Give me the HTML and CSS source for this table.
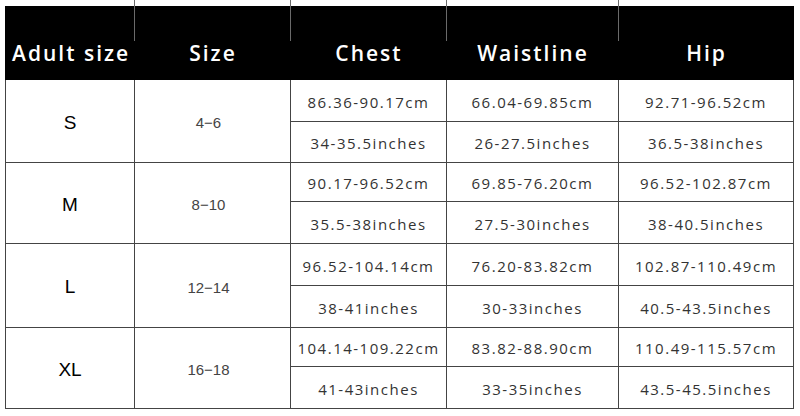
FILE: index.html
```html
<!DOCTYPE html>
<html>
<head>
<meta charset="utf-8">
<link rel="stylesheet" href="styles.css">
</head>
<body>
<div class="chart">
  <div class="hd first">Adult size</div>
  <div class="hd">Size</div>
  <div class="hd">Chest</div>
  <div class="hd">Waistline</div>
  <div class="hd">Hip</div>

  <div class="sz r1">S</div>
  <div class="num r1">4−6</div>
  <div class="val">86.36-90.17cm</div>
  <div class="val">66.04-69.85cm</div>
  <div class="val">92.71-96.52cm</div>
  <div class="val">34-35.5inches</div>
  <div class="val">26-27.5inches</div>
  <div class="val">36.5-38inches</div>

  <div class="sz r2">M</div>
  <div class="num r2">8−10</div>
  <div class="val">90.17-96.52cm</div>
  <div class="val">69.85-76.20cm</div>
  <div class="val">96.52-102.87cm</div>
  <div class="val">35.5-38inches</div>
  <div class="val">27.5-30inches</div>
  <div class="val">38-40.5inches</div>

  <div class="sz r3">L</div>
  <div class="num r3">12−14</div>
  <div class="val">96.52-104.14cm</div>
  <div class="val">76.20-83.82cm</div>
  <div class="val">102.87-110.49cm</div>
  <div class="val">38-41inches</div>
  <div class="val">30-33inches</div>
  <div class="val">40.5-43.5inches</div>

  <div class="sz r4">XL</div>
  <div class="num r4">16−18</div>
  <div class="val">104.14-109.22cm</div>
  <div class="val">83.82-88.90cm</div>
  <div class="val">110.49-115.57cm</div>
  <div class="val">41-43inches</div>
  <div class="val">33-35inches</div>
  <div class="val">43.5-45.5inches</div>
</div>
</body>
</html>
```

FILE: styles.css
```css
html, body {
  margin: 0;
  padding: 0;
  background: #fff;
}
body {
  padding: 6px 0 0 5px;
}
.chart {
  display: grid;
  width: 788px;
  grid-template-columns: 129px 156px 156px 172px 175px;
  grid-template-rows: 74px 42px 41px 39px 42px 42px 42px 39px 42px;
  border-left: 1px solid #444;
  box-sizing: content-box;
}
.hd {
  position: relative;
  background: #000;
  color: #fff;
  font-family: "Open Sans", sans-serif;
  font-weight: 600;
  font-size: 21px;
  line-height: 28px;
  letter-spacing: 2px;
  display: flex;
  justify-content: center;
  align-items: flex-start;
  padding-top: 33px;
  box-sizing: border-box;
  white-space: nowrap;
}
.hd.first {
  justify-content: flex-start;
  padding-left: 7px;
  margin-left: -1px;
}
.hd:not(.first)::before {
  content: "";
  position: absolute;
  left: -1px;
  top: -6px;
  width: 1px;
  height: 41px;
  background: #6a6a6a;
}
.sz, .num, .val {
  display: flex;
  justify-content: center;
  align-items: center;
  border-right: 1px solid #444;
  border-bottom: 1px solid #444;
  box-sizing: border-box;
  white-space: nowrap;
}
.sz {
  grid-column: 1;
  font-family: "Liberation Sans", Arial, sans-serif;
  font-size: 19px;
  color: #000;
  padding-top: 3px;
}
.num {
  grid-column: 2;
  font-family: "Liberation Sans", Arial, sans-serif;
  font-size: 15px;
  color: #444;
  padding-top: 3px;
  padding-right: 8px;
}
.r1 { grid-row: 2 / span 2; }
.r2 { grid-row: 4 / span 2; }
.r3 { grid-row: 6 / span 2; }
.r4 { grid-row: 8 / span 2; }
.val {
  font-family: "Open Sans", sans-serif;
  font-size: 15px;
  letter-spacing: 1.5px;
  color: #333;
  padding-top: 2px;
}
```
